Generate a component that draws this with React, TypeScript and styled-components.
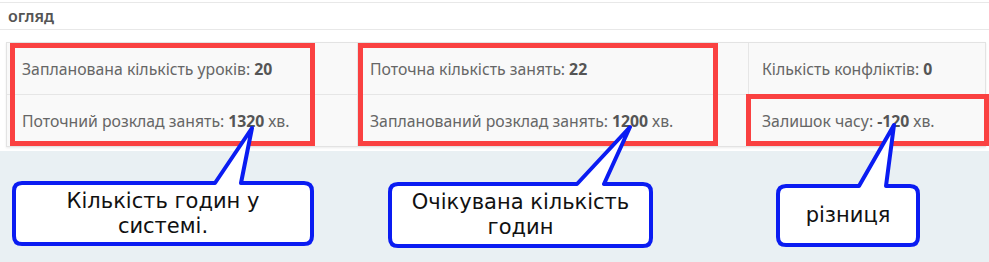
import React from "react";
import styled, { createGlobalStyle } from "styled-components";

const GlobalStyle = createGlobalStyle`
  html, body {
    margin: 0;
    padding: 0;
    background: #e9f0f3;
  }
  body {
    font-family: "Noto Sans", "Lato", sans-serif;
  }
`;

const Stage = styled.div`
  position: relative;
  width: 989px;
  height: 262px;
  overflow: hidden;
`;

const Panel = styled.section`
  background: #ffffff;
  padding-top: 2px;
`;

const PanelHeader = styled.header`
  height: 26px;
  display: flex;
  align-items: center;
  padding-left: 8px;
  border-top: 1px solid #e8e8e8;
  border-bottom: 1px solid #e8e8e8;
  font-size: 16px;
  font-weight: 600;
  color: #555;
`;

const PanelBody = styled.div`
  padding: 12px 3px 4px 6px;
`;

const StatsTable = styled.div`
  display: grid;
  grid-template-columns: 350px 391px 1fr;
  background: #f9f9f9;
  border: 1px solid #e3e3e3;
  box-shadow: 0 1px 2px rgba(0, 0, 0, 0.08);
`;

const Cell = styled.div<{ $top?: boolean; $first?: boolean; $pad: number }>`
  height: 51px;
  display: flex;
  align-items: center;
  padding-left: ${(p) => p.$pad}px;
  border-bottom: ${(p) => (p.$top ? "1px solid #e6e6e6" : "none")};
  border-left: ${(p) => (p.$first ? "none" : "1px solid #e6e6e6")};
  font-size: 15.8px;
  color: #666;
  white-space: nowrap;
`;

const Value = styled.b`
  font-weight: 700;
  color: #555;
  margin-left: 4px;
  margin-right: 4px;
`;

const Highlight = styled.div<{ $x: number; $y: number; $w: number; $h: number }>`
  position: absolute;
  left: ${(p) => p.$x}px;
  top: ${(p) => p.$y}px;
  width: ${(p) => p.$w}px;
  height: ${(p) => p.$h}px;
  box-sizing: border-box;
  border: 5px solid #fa4141;
  pointer-events: none;
`;

const CalloutShape = styled.svg`
  position: absolute;
  left: 0;
  top: 0;
  overflow: visible;
  pointer-events: none;
`;

const CalloutText = styled.div<{ $x: number; $y: number; $w: number; $h: number }>`
  position: absolute;
  left: ${(p) => p.$x}px;
  top: ${(p) => p.$y}px;
  width: ${(p) => p.$w}px;
  height: ${(p) => p.$h}px;
  display: flex;
  align-items: center;
  justify-content: center;
  text-align: center;
  font-family: "DejaVu Sans", Verdana, sans-serif;
  font-size: 21px;
  line-height: 25px;
  color: #111;
`;

type CalloutProps = {
  l: number;
  r: number;
  t: number;
  b: number;
  p1: number;
  p2: number;
  tx: number;
  ty: number;
  children: React.ReactNode;
};

function Callout({ l, r, t, b, p1, p2, tx, ty, children }: CalloutProps) {
  const k = 8;
  const d = `M ${l + k} ${t} H ${p1} L ${tx} ${ty} L ${p2} ${t} H ${r - k} Q ${r} ${t} ${r} ${t + k} V ${b - k} Q ${r} ${b} ${r - k} ${b} H ${l + k} Q ${l} ${b} ${l} ${b - k} V ${t + k} Q ${l} ${t} ${l + k} ${t} Z`;
  return (
    <>
      <CalloutShape width={989} height={262}>
        <path d={d} fill="#ffffff" stroke="#0a1cf2" strokeWidth={4} strokeLinejoin="round" />
      </CalloutShape>
      <CalloutText $x={l} $y={t} $w={r - l} $h={b - t}>
        {children}
      </CalloutText>
    </>
  );
}

export default function App() {
  return (
    <Stage>
      <GlobalStyle />
      <Panel>
        <PanelHeader>огляд</PanelHeader>
        <PanelBody>
          <StatsTable>
            <Cell $top $first $pad={15}>
              Запланована кількість уроків:<Value>20</Value>
            </Cell>
            <Cell $top $pad={12}>
              Поточна кількість занять:<Value>22</Value>
            </Cell>
            <Cell $top $pad={13}>
              Кількість конфліктів:<Value>0</Value>
            </Cell>
            <Cell $first $pad={15}>
              Поточний розклад занять:<Value>1320</Value>хв.
            </Cell>
            <Cell $pad={12}>
              Запланований розклад занять:<Value>1200</Value>хв.
            </Cell>
            <Cell $pad={13}>
              Залишок часу:<Value>-120</Value>хв.
            </Cell>
          </StatsTable>
        </PanelBody>
      </Panel>

      <Highlight $x={10} $y={43} $w={305} $h={103} />
      <Highlight $x={358} $y={43} $w={360} $h={103} />
      <Highlight $x={746} $y={94} $w={243} $h={52} />

      <Callout l={14} r={312} t={183} b={244} p1={215} p2={241} tx={252} ty={128}>
        Кількість годин у<br />системі.
      </Callout>
      <Callout l={390} r={651} t={184} b={246} p1={577} p2={604} tx={630} ty={127}>
        Очікувана кількість<br />годин
      </Callout>
      <Callout l={778} r={918} t={186} b={245} p1={859} p2={886} tx={894} ty={125}>
        різниця
      </Callout>
    </Stage>
  );
}
